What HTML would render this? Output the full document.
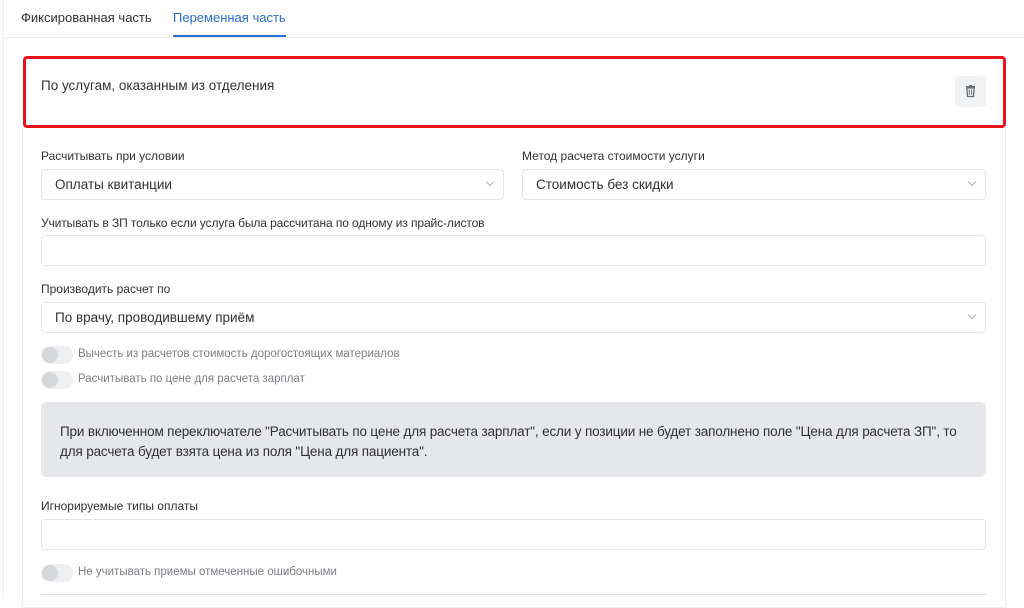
<!DOCTYPE html>
<html><head><meta charset="utf-8"><style>
*{box-sizing:border-box;margin:0;padding:0}
body{width:1024px;height:599px;overflow:hidden;background:#fff;font-family:"Liberation Sans",sans-serif;color:#303133;position:relative}
.abs{position:absolute}
.lbl{font-size:12px;color:#303133}
.inp{position:absolute;height:31px;border:1px solid #e4e6ea;border-radius:4px;background:#fff;font-size:13.5px;padding-left:13px;line-height:29px;color:#303133}
.chev{position:absolute;right:10px;top:9px;width:6px;height:6px;border-right:1px solid #b0b3b8;border-bottom:1px solid #b0b3b8;transform:rotate(45deg)}
.tg{position:absolute;left:41px;width:32px;height:18px;border-radius:9px;background:#eeeff1}
.tg:after{content:"";position:absolute;left:1px;top:1px;width:16px;height:16px;border-radius:50%;background:#d6d7da}
.tl{position:absolute;left:78px;font-size:11.5px;color:#7a7d82}
</style></head><body>
<div class="abs" style="left:3px;top:0;width:1px;height:599px;background:#eceef1"></div>
<div class="abs" style="left:4px;top:37px;width:1020px;height:1px;background:#eceef1"></div>
<div class="abs" style="left:21px;top:10px;font-size:13px;color:#303133">Фиксированная часть</div>
<div class="abs" style="left:173px;top:10px;font-size:13px;color:#2a6dd1">Переменная часть</div>
<div class="abs" style="left:173px;top:35px;width:113px;height:2px;background:#2a6dd1"></div>
<div class="abs" style="left:22px;top:128px;width:984px;height:480px;border:1px solid #eceef1;border-top:none"></div>
<div class="abs" style="left:23px;top:56px;width:983px;height:72px;border:3px solid #e8131b;border-radius:4px"></div>
<div class="abs" style="left:41px;top:78px;font-size:13.5px;color:#303133">По услугам, оказанным из отделения</div>
<div class="abs" style="left:955px;top:76px;width:31px;height:31px;border-radius:4px;background:#f1f2f4">
<svg width="31" height="31" viewBox="0 0 31 31"><rect x="11" y="10" width="9" height="1.5" fill="#6b6e73"/><rect x="14" y="9" width="3" height="1.5" fill="#6b6e73"/><path d="M11.8 12h7.4l-.7 8.5h-6z" fill="none" stroke="#6b6e73" stroke-width="1.3"/><path d="M14.3 13.5v5.5M16.7 13.5v5.5" stroke="#6b6e73" stroke-width="1"/></svg></div>
<div class="abs lbl" style="left:41px;top:149px">Расчитывать при условии</div>
<div class="abs lbl" style="left:522px;top:149px">Метод расчета стоимости услуги</div>
<div class="inp" style="left:41px;top:169px;width:463px">Оплаты квитанции<span class="chev"></span></div>
<div class="inp" style="left:522px;top:169px;width:464px">Стоимость без скидки<span class="chev"></span></div>
<div class="abs lbl" style="left:41px;top:216px;letter-spacing:-0.1px">Учитывать в ЗП только если услуга была рассчитана по одному из прайс-листов</div>
<div class="inp" style="left:41px;top:235px;width:945px"></div>
<div class="abs lbl" style="left:41px;top:282px">Производить расчет по</div>
<div class="inp" style="left:41px;top:302px;width:945px">По врачу, проводившему приём<span class="chev"></span></div>
<div class="tg" style="top:346px"></div><div class="tl" style="top:348px">Вычесть из расчетов стоимость дорогостоящих материалов</div>
<div class="tg" style="top:371px"></div><div class="tl" style="top:373px">Расчитывать по цене для расчета зарплат</div>
<div class="abs" style="left:41px;top:402px;width:945px;height:75px;background:#e6e7eb;border-radius:6px;padding:20px 19px;font-size:13.5px;letter-spacing:-0.15px;line-height:20px;color:#303133">При включенном переключателе "Расчитывать по цене для расчета зарплат", если у позиции не будет заполнено поле "Цена для расчета ЗП", то для расчета будет взята цена из поля "Цена для пациента".</div>
<div class="abs lbl" style="left:41px;top:499px">Игнорируемые типы оплаты</div>
<div class="inp" style="left:41px;top:519px;width:945px"></div>
<div class="tg" style="top:564px"></div><div class="tl" style="top:566px">Не учитывать приемы отмеченные ошибочными</div>
<div class="abs" style="left:41px;top:594px;width:945px;height:1px;background:#dcdfe3"></div>
</body></html>
